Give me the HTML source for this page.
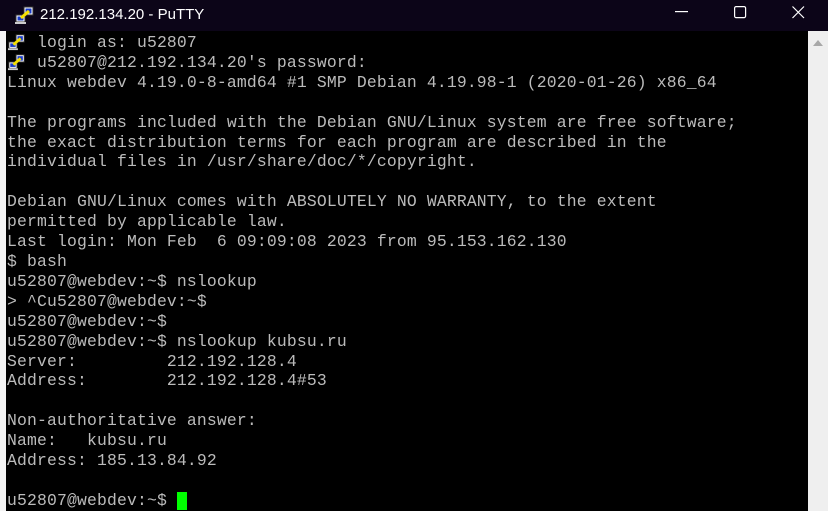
<!DOCTYPE html>
<html><head><meta charset="utf-8"><style>
*{margin:0;padding:0;box-sizing:border-box}
body{width:828px;height:511px;overflow:hidden;background:#000;position:relative;font-family:"Liberation Mono",monospace}
#title{position:absolute;left:0;top:0;width:828px;height:31px;background:#0c0518;color:#fff;font-family:"Liberation Sans",sans-serif;font-size:15px}
#title .t{position:absolute;left:40px;top:6px}
#left{position:absolute;left:0;top:31px;width:6px;height:480px;background:#f4f4f4}
#sb{position:absolute;left:808px;top:31px;width:20px;height:480px;background:#efefef}
#sb .a{position:absolute;left:5px;top:9px;width:0;height:0;border-left:5px solid transparent;border-right:5px solid transparent;border-bottom:6px solid #a8a8a8}
#term{position:absolute;left:7px;top:33px;color:#bbbbbb;font-size:16.4px;line-height:19.91px;white-space:pre;letter-spacing:0.16px}
.ic{position:absolute}
#cur{position:absolute;left:177px;top:492px;width:10px;height:18px;background:#00ff00}
</style></head><body>
<div id="title">
<svg class="ic" style="left:15px;top:6px" width="20" height="18" viewBox="0 0 20 18"><rect x="9" y="1" width="9" height="8" fill="#fff" stroke="#333"/><rect x="10.5" y="2.5" width="6" height="5" fill="#1a3cc8"/><rect x="1" y="9" width="9" height="7" fill="#fff" stroke="#333"/><rect x="2.5" y="10.5" width="6" height="4" fill="#1a3cc8"/><path d="M6 12 L14 5" stroke="#f5e000" stroke-width="3"/><rect x="0" y="16" width="11" height="2" fill="#ccc"/></svg>
<span class="t">212.192.134.20 - PuTTY</span>
<svg style="position:absolute;left:675px;top:11px" width="14" height="2"><rect width="13" height="1.2" fill="#fff"/></svg>
<svg style="position:absolute;left:734px;top:6px" width="13" height="13"><rect x="0.6" y="0.6" width="11" height="11" rx="1.5" fill="none" stroke="#fff" stroke-width="1.2"/></svg>
<svg style="position:absolute;left:792px;top:6px" width="13" height="13"><path d="M0.5 0.5L12 12M12 0.5L0.5 12" stroke="#fff" stroke-width="1.2"/></svg>
</div>
<div id="left"></div>
<svg class="ic" style="left:8px;top:33px" width="18" height="18" viewBox="0 0 20 18"><rect x="9" y="1" width="9" height="8" fill="#fff" stroke="#333"/><rect x="10.5" y="2.5" width="6" height="5" fill="#1a3cc8"/><rect x="1" y="9" width="9" height="7" fill="#fff" stroke="#333"/><rect x="2.5" y="10.5" width="6" height="4" fill="#1a3cc8"/><path d="M6 12 L14 5" stroke="#f5e000" stroke-width="3"/><rect x="0" y="16" width="11" height="2" fill="#ccc"/></svg>
<svg class="ic" style="left:8px;top:53px" width="18" height="18" viewBox="0 0 20 18"><rect x="9" y="1" width="9" height="8" fill="#fff" stroke="#333"/><rect x="10.5" y="2.5" width="6" height="5" fill="#1a3cc8"/><rect x="1" y="9" width="9" height="7" fill="#fff" stroke="#333"/><rect x="2.5" y="10.5" width="6" height="4" fill="#1a3cc8"/><path d="M6 12 L14 5" stroke="#f5e000" stroke-width="3"/><rect x="0" y="16" width="11" height="2" fill="#ccc"/></svg>
<div id="term">   login as: u52807
   u52807@212.192.134.20's password:
Linux webdev 4.19.0-8-amd64 #1 SMP Debian 4.19.98-1 (2020-01-26) x86_64

The programs included with the Debian GNU/Linux system are free software;
the exact distribution terms for each program are described in the
individual files in /usr/share/doc/*/copyright.

Debian GNU/Linux comes with ABSOLUTELY NO WARRANTY, to the extent
permitted by applicable law.
Last login: Mon Feb  6 09:09:08 2023 from 95.153.162.130
$ bash
u52807@webdev:~$ nslookup
> ^Cu52807@webdev:~$
u52807@webdev:~$
u52807@webdev:~$ nslookup kubsu.ru
Server:         212.192.128.4
Address:        212.192.128.4#53

Non-authoritative answer:
Name:   kubsu.ru
Address: 185.13.84.92

u52807@webdev:~$</div>
<div id="cur"></div>
<div id="sb"><div class="a"></div></div>
</body></html>
